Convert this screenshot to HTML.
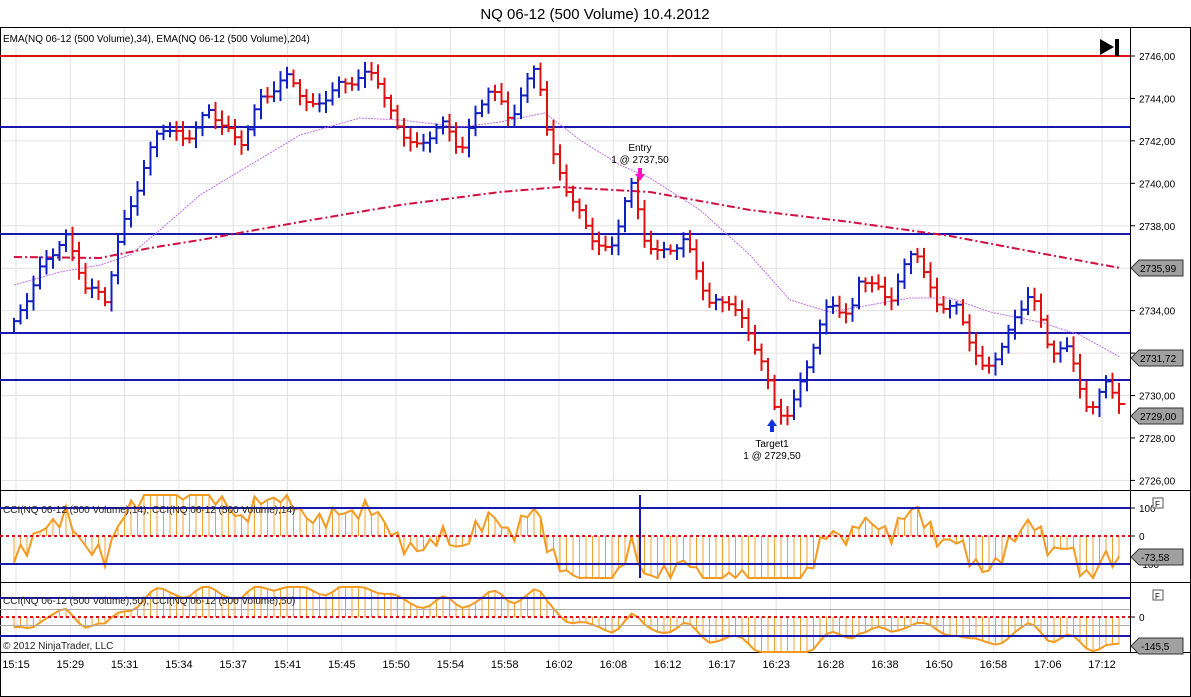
<!DOCTYPE html>
<html><head><meta charset="utf-8"><style>
body{margin:0;background:#fff;width:1191px;height:697px;overflow:hidden;font-family:"Liberation Sans",sans-serif}
svg{position:absolute;left:0;top:0}
</style></head><body>
<svg id="s" width="1191" height="697" xmlns="http://www.w3.org/2000/svg" font-family="Liberation Sans, sans-serif">
<rect width="1191" height="697" fill="#fff"/>
<g id="grid" stroke="#e2e2e2" stroke-width="1"></g>
<text x="595" y="19" font-size="15" text-anchor="middle" fill="#000">NQ 06-12 (500 Volume)  10.4.2012</text>
<line x1="0" y1="27.5" x2="1191" y2="27.5" stroke="#000"/>
<line x1="0" y1="490.5" x2="1191" y2="490.5" stroke="#000"/>
<line x1="0" y1="582.5" x2="1191" y2="582.5" stroke="#000"/>
<line x1="0" y1="652.5" x2="1191" y2="652.5" stroke="#000"/>
<line x1="0.5" y1="27" x2="0.5" y2="697" stroke="#000"/>
<line x1="1190.5" y1="27" x2="1190.5" y2="697" stroke="#000"/>
<line x1="0" y1="696.5" x2="1191" y2="696.5" stroke="#000"/>
<line x1="1130.5" y1="27" x2="1130.5" y2="652" stroke="#000"/>
<g id="osc"></g>
<g stroke-width="2">
<line x1="0" y1="56" x2="1130" y2="56" stroke="#e01010"/>
<line x1="0" y1="127" x2="1130" y2="127" stroke="#1818b0"/>
<line x1="0" y1="234" x2="1130" y2="234" stroke="#1818b0"/>
<line x1="0" y1="333" x2="1130" y2="333" stroke="#1818b0"/>
<line x1="0" y1="380" x2="1130" y2="380" stroke="#1818b0"/>
<line x1="0" y1="508" x2="1130" y2="508" stroke="#1818b0"/>
<line x1="0" y1="564" x2="1130" y2="564" stroke="#1818b0"/>
<line x1="0" y1="536" x2="1130" y2="536" stroke="#e01010" stroke-dasharray="3,3"/>
<line x1="0" y1="598" x2="1130" y2="598" stroke="#1818b0"/>
<line x1="0" y1="636" x2="1130" y2="636" stroke="#1818b0"/>
<line x1="0" y1="617" x2="1130" y2="617" stroke="#e01010" stroke-dasharray="3,3"/>
</g>
<line x1="0" y1="609.5" x2="1130" y2="609.5" stroke="#aaa"/>
<line x1="0" y1="625.5" x2="1130" y2="625.5" stroke="#aaa"/>
<line x1="640" y1="495" x2="640" y2="578" stroke="#1818b0" stroke-width="2"/>
<g id="ema"></g>
<g id="bars"></g>
<text x="3" y="42" font-size="10" fill="#000">EMA(NQ 06-12 (500 Volume),34), EMA(NQ 06-12 (500 Volume),204)</text>
<text x="3" y="513" font-size="10" fill="#222">CCI(NQ 06-12 (500 Volume),14), CCI(NQ 06-12 (500 Volume),14)</text>
<text x="3" y="604" font-size="10" fill="#222">CCI(NQ 06-12 (500 Volume),50), CCI(NQ 06-12 (500 Volume),50)</text>
<text x="3" y="649" font-size="10" fill="#222">© 2012 NinjaTrader, LLC</text>
<text x="640" y="151" font-size="10" text-anchor="middle">Entry</text>
<text x="640" y="163" font-size="10" text-anchor="middle">1 @ 2737,50</text>
<text x="772" y="447" font-size="10" text-anchor="middle">Target1</text>
<text x="772" y="459" font-size="10" text-anchor="middle">1 @ 2729,50</text>
<path d="M638 168h4v6h3l-5 7-5-7h3z" fill="#ff10c0"/>
<path d="M770 432h4v-6h3l-5-7-5 7h3z" fill="#1030e0"/>
<path d="M1100 39l14 8-14 8z" fill="#000"/><rect x="1115" y="39" width="4" height="17" fill="#000"/>
<g id="axis" font-size="10" fill="#000"></g>
<rect x="1153" y="498" width="10" height="10" fill="#fff" stroke="#555"/><text x="1155" y="507" font-size="8">F</text>
<rect x="1153" y="590" width="10" height="10" fill="#fff" stroke="#555"/><text x="1155" y="599" font-size="8">F</text>
<g id="time" font-size="11" fill="#000" text-anchor="middle"></g>
</svg>
<script>
var NS="http://www.w3.org/2000/svg";
function el(p,t,a,txt){var e=document.createElementNS(NS,t);for(var k in a)e.setAttribute(k,a[k]);if(txt!=null)e.textContent=txt;document.getElementById(p).appendChild(e);return e;}
var Y=function(p){return 56+(2746-p)*21.22;};
var times=["15:15","15:29","15:31","15:34","15:37","15:41","15:45","15:50","15:54","15:58","16:02","16:08","16:12","16:17","16:23","16:28","16:38","16:50","16:58","17:06","17:12"];
for(var i=0;i<times.length;i++){var x=16+i*54.3;el("grid","line",{x1:x,y1:28,x2:x,y2:652});el("time","text",{x:x,y:668},times[i]);}
for(var p=2726;p<=2746;p+=2){var y=Y(p);el("grid","line",{x1:0,y1:y,x2:1130,y2:y});el("axis","line",{x1:1130,y1:y,x2:1135,y2:y,stroke:"#000"});
 if(p!=2736)el("axis","text",{x:1139,y:y+4},(p+",00"));}
[[2735.99,268],[2731.72,358],[2729.00,416]].forEach(function(b){var y=b[1];el("axis","path",{d:"M1131 "+y+"l8-8h44v16h-44z",fill:"#a0a0a0",stroke:"#333"});el("axis","text",{x:1140,y:y+4},b[0].toFixed(2).replace(".",","));});
el("axis","line",{x1:1130,y1:508,x2:1135,y2:508,stroke:"#000"});el("axis","line",{x1:1130,y1:536,x2:1135,y2:536,stroke:"#000"});el("axis","line",{x1:1130,y1:617,x2:1135,y2:617,stroke:"#000"});
el("axis","text",{x:1139,y:512},"100");el("axis","text",{x:1139,y:540},"0");el("axis","text",{x:1139,y:568},"-100");
el("axis","path",{d:"M1131 557l8-8h44v16h-44z",fill:"#a0a0a0",stroke:"#333"});el("axis","text",{x:1141,y:561},"-73,58");
el("axis","text",{x:1139,y:621},"0");
el("axis","path",{d:"M1131 646l8-8h44v16h-44z",fill:"#a0a0a0",stroke:"#333"});el("axis","text",{x:1141,y:650},"-145,5");
var K=[[14,325],[40,270],[65,235],[85,285],[105,300],[120,235],[140,180],[160,125],[185,140],[210,110],[240,145],[260,100],[290,75],[310,110],[340,85],[375,72],[395,125],[420,150],[440,120],[460,150],[490,85],[510,120],[537,62],[550,150],[565,185],[590,235],[610,255],[630,180],[645,240],[660,255],[685,240],[710,305],[730,300],[760,355],[775,410],[790,415],[810,355],[830,300],[850,320],[860,275],[890,300],[915,245],[935,305],[955,305],[985,375],[1010,330],[1030,290],[1050,350],[1070,350],[1090,420],[1105,375],[1122,415]];
function interp(A,x){if(x<=A[0][0])return A[0][1];for(var i=1;i<A.length;i++)if(x<=A[i][0]){var t=(x-A[i-1][0])/(A[i][0]-A[i-1][0]);return A[i-1][1]+t*(A[i][1]-A[i-1][1]);}return A[A.length-1][1];}
var E34=[[14,285],[60,272],[100,265],[130,255],[160,230],[200,195],[250,165],[300,135],[360,118],[400,120],[460,127],[500,122],[545,113],[580,140],[620,165],[650,178],[700,210],[750,255],[790,300],[830,312],[870,305],[910,298],[950,298],[990,312],[1040,322],[1080,335],[1120,357]];
var E204=[[14,257],[100,258],[150,248],[200,240],[300,222],[400,205],[500,192],[560,187],[650,192],[750,210],[850,222],[950,236],[1050,255],[1120,268]];
el("ema","polyline",{points:E34.map(function(a){return a.join(",")}).join(" "),fill:"none",stroke:"#c070e8","stroke-width":1,"stroke-dasharray":"2,1"});
el("ema","polyline",{points:E204.map(function(a){return a.join(",")}).join(" "),fill:"none",stroke:"#d01040","stroke-width":2,"stroke-dasharray":"8,3,2,3"});
var prev=interp(K,14),c14=[],c50=[];
for(var x=14;x<=1122;x+=6.5){
 var y=interp(K,x)+Math.sin(x*1.7)*4;
 var up=y<prev;var col=up?"#1020c0":"#e01010";
 var hi=Math.min(y,prev)-3-Math.abs(Math.sin(x*0.9))*7, lo=Math.max(y,prev)+3+Math.abs(Math.cos(x*1.3))*7;
 el("bars","line",{x1:x,y1:hi,x2:x,y2:lo,stroke:col,"stroke-width":2});
 el("bars","line",{x1:x,y1:y,x2:x+6.5,y2:y,stroke:col,"stroke-width":2});
 prev=y;
 var v=(interp(E34,x)-y)*0.6+Math.sin(x*0.4)*8;
 c14.push([x,Math.max(495,Math.min(578,536-v))]);
 var w=(interp(E204,x)-y)*0.22+Math.sin(x*0.13)*4;
 c50.push([x,Math.max(587,Math.min(652,617-w))]);
}
c14.forEach(function(a){el("osc","line",{x1:a[0],y1:536,x2:a[0],y2:a[1],stroke:"#f0a030","stroke-width":1});});
c50.forEach(function(a){el("osc","line",{x1:a[0],y1:617,x2:a[0],y2:a[1],stroke:"#f0a030","stroke-width":1});});
el("osc","polyline",{points:c14.map(function(a){return a.join(",")}).join(" "),fill:"none",stroke:"#f59a20","stroke-width":2});
el("osc","polyline",{points:c50.map(function(a){return a.join(",")}).join(" "),fill:"none",stroke:"#f59a20","stroke-width":2});
</script>
</body></html>
